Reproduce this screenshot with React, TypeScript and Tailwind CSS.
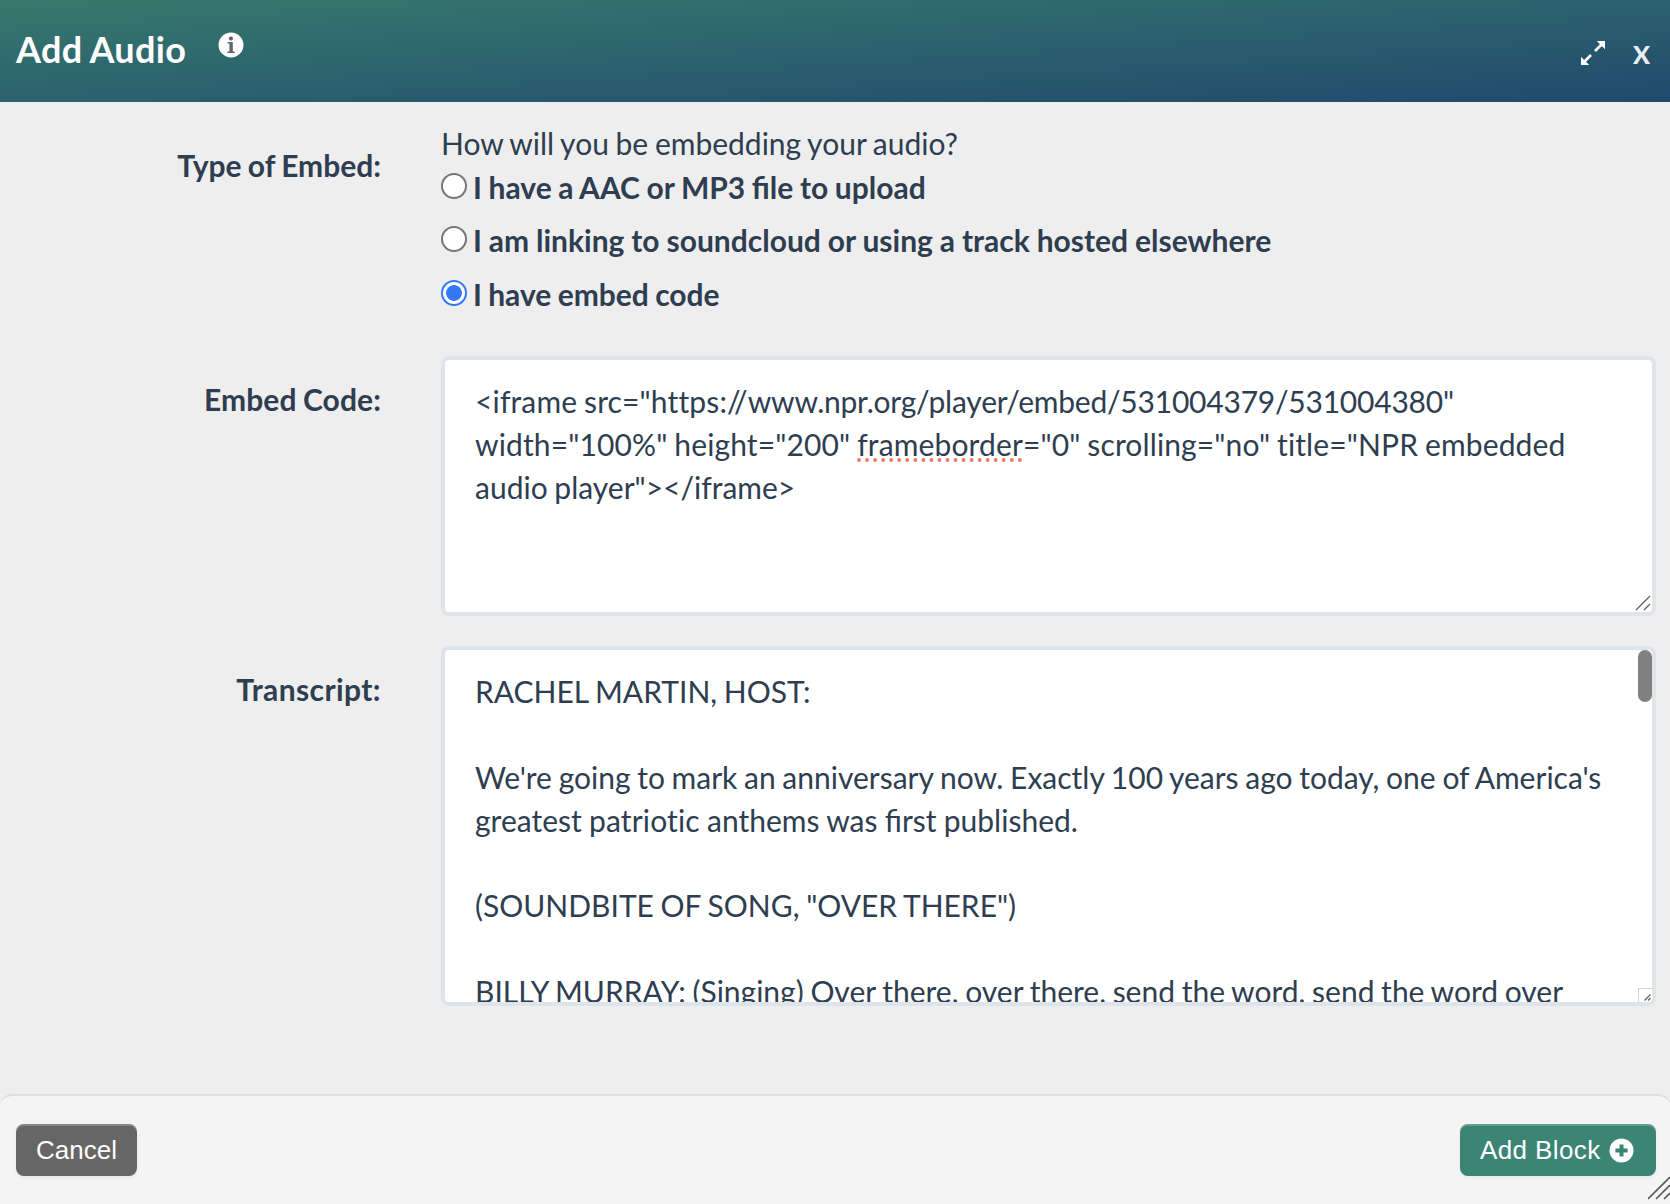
import { useState } from 'react'
import type { ReactNode } from 'react'

interface FieldRowProps {
  label: string;
  labelClass: string;
  children: ReactNode;
}

const embedTypes = [
  { id: 'upload', label: 'I have a AAC or MP3 file to upload', spacing: '[word-spacing:-0.7px]' },
  { id: 'link', label: 'I am linking to soundcloud or using a track hosted elsewhere', spacing: '[word-spacing:-0.4px]' },
  { id: 'code', label: 'I have embed code', spacing: '[word-spacing:-1px]' },
]

const FieldRow = ({ label, labelClass, children }: FieldRowProps) => (
  <div className="flex">
    <div className={`w-[381px] shrink-0 text-right font-bold ${labelClass}`}>{label}</div>
    <div className="ml-[60px] w-[1215px] shrink-0">{children}</div>
  </div>
)

const InfoIcon = () => (
  <svg className="size-[26px]" viewBox="0 0 26 26">
    <circle cx="13" cy="13" r="12.5" fill="#fff" />
    <circle cx="12.9" cy="6.6" r="2.1" fill="#5f6672" />
    <path d="M9.6 10h5.2v9.4h1.9v1.5H9.4v-1.5h2v-7.9H9.6z" fill="#5f6672" />
  </svg>
)

const ExpandIcon = () => (
  <svg className="h-6 w-6" viewBox="0 0 24 24" fill="none" stroke="#fff" strokeWidth="2.6">
    <path d="M14 10 21 3M10 14 3 21" />
    <path d="M15.8 0H24v8.2zM8.2 24H0v-8.2z" fill="#fff" stroke="none" />
  </svg>
)

const PlusCircleIcon = () => (
  <svg className="size-[25px]" viewBox="0 0 25 25">
    <circle cx="12.5" cy="12.5" r="12" fill="#fff" />
    <path d="M12.5 6.4v12.2M6.4 12.5h12.2" stroke="#3c8574" strokeWidth="4" />
  </svg>
)

export default function App() {
  const [embedType, setEmbedType] = useState('code')

  return (
    <div className="flex h-[1204px] w-[1670px] flex-col overflow-hidden bg-[#eeeeee] font-['Lato',sans-serif] text-[30px] leading-[42.86px] [word-spacing:-1px] text-[#2e3e50]">
      <header className="flex h-[102px] shrink-0 items-start bg-linear-to-br from-[#37796c] to-[#22496d] pl-4 text-white">
        <h1 className="mt-[24px] w-[202px] text-[36px] leading-[50px] font-bold tracking-[0.35px]">Add Audio</h1>
        <div className="mt-8">
          <InfoIcon />
        </div>
        <button type="button" className="mt-[41px] ml-auto">
          <ExpandIcon />
        </button>
        <button
          type="button"
          className="mt-[35px] mr-[21px] ml-[28px] w-4 text-center text-[25px] leading-[38px] font-black text-[#e8eef2]"
        >
          X
        </button>
      </header>

      <main className="h-[992px] shrink-0">
        <div className="h-[254px] pt-[20px]">
          <FieldRow label="Type of Embed:" labelClass="pt-[22px]">
            <p className="mb-px">How will you be embedding your audio?</p>
            {embedTypes.map((type) => (
              <label key={type.id} className="flex h-[53.5px] items-start font-bold">
                <input
                  type="radio"
                  name="embedType"
                  checked={embedType === type.id}
                  onChange={() => setEmbedType(type.id)}
                  className="mt-[7px] mr-[6px] size-[26px] shrink-0 appearance-none rounded-full border-2 border-[#767676] bg-white checked:border-[#3478f6] checked:bg-radial checked:from-[#3478f6] checked:from-[7.5px] checked:to-white checked:to-[8.2px]"
                />
                <span className={type.spacing}>{type.label}</span>
              </label>
            ))}
          </FieldRow>
        </div>

        <FieldRow label="Embed Code:" labelClass="pt-[22px] tracking-[0.1px]">
          <div className="relative h-[260px] overflow-hidden rounded-lg border-4 border-[#dde4ec] bg-white px-[30px] pt-[20px] whitespace-pre [font-variant-ligatures:none]">
            <p>
              <span className="tracking-[0.14px]">{'<iframe src="https://'}</span>
              <span className="tracking-[-0.22px]">{'www.npr.org/player/embed/531004379/531004380"'}</span>
            </p>
            <p className="tracking-[0.13px]">
              {'width="100%" height="200" '}
              <span className="underline decoration-[#f07a72] decoration-dotted decoration-4 underline-offset-[3px] [text-decoration-skip-ink:none]">frameborder</span>
              {'="0" scrolling="no" title="NPR embedded'}
            </p>
            <p>{'audio player"></iframe>'}</p>
            <svg className="absolute right-[1px] bottom-[1px] size-4" viewBox="0 0 16 16" stroke="#5c5c5c" strokeWidth="1.3">
              <path d="M1 15 15 1M9 15l6-6" />
            </svg>
          </div>
        </FieldRow>

        <div className="mt-[30px]">
          <FieldRow label="Transcript:" labelClass="pt-[22px] tracking-[0.4px]">
            <div className="relative h-[360px] overflow-hidden rounded-lg border-4 border-[#dde4ec] bg-white pt-[20px] pl-[30px] whitespace-pre">
              <p>RACHEL MARTIN, HOST:</p>
              <p className="mt-[42.86px]">We're going to mark an anniversary now. Exactly 100 years ago today, one of America's</p>
              <p className="[word-spacing:-0.4px]">
                greatest <span className="tracking-[0.15px] [font-variant-ligatures:none]">patriotic</span> anthems was first published.
              </p>
              <p className="mt-[42.86px]">(SOUNDBITE OF SONG, "OVER THERE")</p>
              <p className="mt-[42.86px]">BILLY MURRAY: (Singing) Over there, over there, send the word, send the word over</p>
              <div className="absolute top-0 right-0 h-[52px] w-[14px] rounded-full bg-[#808080]" />
              <div className="absolute right-0 bottom-0 size-[14px] border-t border-l border-[#d4d4d4] bg-white">
                <svg className="absolute right-[1px] bottom-[1px] size-[7px]" viewBox="0 0 7 7" stroke="#5c5c5c" strokeWidth="1.2">
                  <path d="M.5 6.5l6-6M4 6.5 6.5 4" />
                </svg>
              </div>
            </div>
          </FieldRow>
        </div>
      </main>

      <footer className="relative flex h-[110px] shrink-0 items-start justify-between rounded-t-xl border-t-2 border-[#dddddd] bg-[#f4f4f4] pt-7 pr-[14px] pl-4 font-['Liberation_Sans',sans-serif] text-[26px] leading-[52px] [word-spacing:0px] text-white [text-shadow:0_-2px_0_rgba(0,0,0,0.25)]">
        <button
          type="button"
          className="h-[52px] w-[121px] rounded-lg bg-[#666666] shadow-[inset_0_2px_0_rgba(255,255,255,0.2),0_2px_4px_rgba(0,0,0,0.05)]"
        >
          Cancel
        </button>
        <button
          type="button"
          className="flex h-[52px] w-[196px] items-center gap-[8px] rounded-lg bg-[#3c8574] pl-5 tracking-[0.4px] shadow-[inset_0_2px_0_rgba(255,255,255,0.2),0_2px_4px_rgba(0,0,0,0.05)]"
        >
          Add Block
          <PlusCircleIcon />
        </button>
        <svg className="absolute right-0 bottom-0 h-7 w-[22px]" viewBox="0 0 22 28" stroke="#5a5a5a" strokeWidth="1.7">
          <path d="M0 23 22 1M8 23 22 9M16 23l6-6" />
        </svg>
      </footer>
    </div>
  )
}
